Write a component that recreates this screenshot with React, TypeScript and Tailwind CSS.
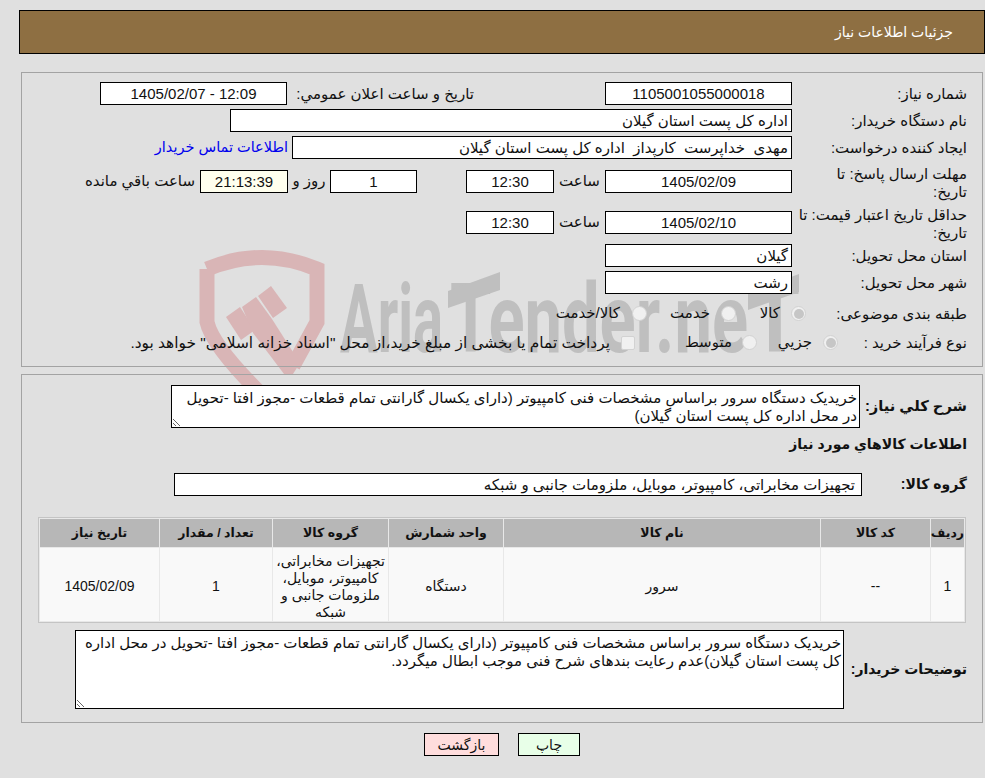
import React from "react";

const Field = ({ w, center, bg, children }: { w: string; center?: boolean; bg?: string; children?: React.ReactNode }) => (
  <div className={`${w} h-[23px] shrink-0 border border-black ${bg ?? "bg-white"} px-[3px] leading-[22px] whitespace-pre ${center ? "text-center" : "text-right"}`}>
    {children}
  </div>
);

const Label = ({ children }: { children: React.ReactNode }) => (
  <div className="w-[175px] shrink-0 leading-[22px]">{children}</div>
);

const Radio = ({ on }: { on?: boolean }) => (
  <span className="w-[15px] h-[15px] shrink-0 rounded-full border border-[#d2d2d2] bg-[#f0f0f0] flex items-center justify-center">
    {on && <span className="w-[10px] h-[10px] rounded-full bg-[#c6c6c6]" />}
  </span>
);

function Watermark() {
  return (
    <svg dir="ltr" className="absolute left-[190px] top-[240px] z-0" width="630" height="160" viewBox="190 240 630 160">
      <g fill="none" stroke="#d9b5b6" strokeWidth="15">
        <path d="M207 269 Q262 246 317 269 L317 322 L293 366" />
        <path d="M207 269 L207 322 Q212 345 259 392" />
      </g>
      <g fill="#d9b5b6">
        <path d="M226 317 L240 307 L255 330 L241 340 Z" />
        <path d="M242 307 L256 297 L272 319 L300 363 L293 374 L284 374 L253 333 Z" />
        <path d="M258 296 L271 286 L287 308 L273 318 Z" />
      </g>
      <g fill="#bfbfbf" fontFamily="Roboto, sans-serif" fontWeight="700" fontSize="96" direction="ltr">
        <text x="340" y="352" textLength="103" lengthAdjust="spacingAndGlyphs">Aria</text>
        <text x="450" y="352" textLength="298" lengthAdjust="spacingAndGlyphs">Tender.ne</text>
        <text x="750" y="352" textLength="50" lengthAdjust="spacingAndGlyphs">T</text>
        <path d="M448 291 L500 272 L500 290 L448 308 Z" />
        <path d="M748 293 L799 274 L799 292 L748 310 Z" />
      </g>
    </svg>
  );
}

export default function App() {
  return (
    <div dir="rtl" className="relative w-[985px] h-[778px] overflow-hidden bg-[#e0e0e0] text-[15px] text-[#111] font-['Liberation_Sans','DejaVu_Sans',sans-serif]">
      <Watermark />

      <div className="relative z-10 pt-[10px]">
        <div className="mr-0 ml-[19px] h-[44px] border border-black bg-[#8e6f42] text-white text-[14px] pr-[31px] leading-[43px]">
          جزئیات اطلاعات نیاز
        </div>

        {/* top panel */}
        <div className="mt-[18px] ml-[21px] mr-[2px] h-[295px] border border-[#a3a3a3] pt-[9px] pr-[15px] flex flex-col">
          <div className="flex items-center h-[23px]">
            <Label>شماره نیاز:</Label>
            <Field w="w-[187px]" center>1105001055000018</Field>
            <div className="mr-[131px] w-[187px] shrink-0 leading-[22px]">تاریخ و ساعت اعلان عمومي:</div>
            <Field w="w-[187px]" center>12:09 - 1405/02/07</Field>
          </div>
          <div className="flex items-center h-[23px] mt-[4px]">
            <Label>نام دستگاه خریدار:</Label>
            <Field w="w-[562px]">اداره کل پست استان گیلان</Field>
          </div>
          <div className="flex items-center h-[23px] mt-[4px]">
            <Label>ایجاد کننده درخواست:</Label>
            <Field w="w-[500px]">مهدی  خداپرست  کارپداز  اداره کل پست استان گیلان</Field>
            <span className="mr-[4px] text-[#0000ee] text-[14.5px] whitespace-nowrap">اطلاعات تماس خریدار</span>
          </div>
          <div className="flex items-center h-[23px] mt-[11px]">
            <Label>
              <div className="mt-[3px] leading-[18px]">مهلت ارسال پاسخ: تا<br />تاریخ:</div>
            </Label>
            <Field w="w-[187px]" center>1405/02/09</Field>
            <span className="w-[51px] shrink-0 text-center">ساعت</span>
            <Field w="w-[88px]" center>12:30</Field>
            <div className="w-[49px] shrink-0" />
            <Field w="w-[87px]" center>1</Field>
            <span className="w-[42px] shrink-0 text-center">روز و</span>
            <Field w="w-[88px]" center bg="bg-[#ffffee]">21:13:39</Field>
            <span className="mr-[5px] whitespace-nowrap">ساعت باقي مانده</span>
          </div>
          <div className="flex items-center h-[23px] mt-[18px]">
            <Label>
              <div className="mt-[3px] leading-[18px]">حداقل تاریخ اعتبار قیمت: تا<br />تاریخ:</div>
            </Label>
            <Field w="w-[187px]" center>1405/02/10</Field>
            <span className="w-[51px] shrink-0 text-center">ساعت</span>
            <Field w="w-[88px]" center>12:30</Field>
          </div>
          <div className="flex items-center h-[23px] mt-[10px]">
            <Label>استان محل تحویل:</Label>
            <Field w="w-[187px]">گیلان</Field>
          </div>
          <div className="flex items-center h-[23px] mt-[4px]">
            <Label>شهر محل تحویل:</Label>
            <Field w="w-[187px]">رشت</Field>
          </div>
          <div className="flex items-center h-[23px] mt-[8px]">
            <div className="w-[161px] shrink-0 leading-[22px]">طبقه بندی موضوعی:</div>
            <Radio on />
            <span className="mr-[11px] w-[44px]">کالا</span>
            <Radio />
            <span className="mr-[11px] w-[63px]">خدمت</span>
            <Radio />
            <span className="mr-[12px] whitespace-nowrap">کالا/خدمت</span>
          </div>
          <div className="flex items-center h-[23px] mt-[6px]">
            <div className="w-[129px] shrink-0 leading-[22px]">نوع فرآیند خرید :</div>
            <Radio on />
            <span className="mr-[11px] w-[55px]">جزیي</span>
            <Radio />
            <span className="mr-[10px] w-[97px]">متوسط</span>
            <span className="w-[14px] h-[14px] shrink-0 rounded-[2px] border border-[#d2d2d2] bg-[#f0f0f0]" />
            <span className="mr-[11px] text-[15.4px] whitespace-nowrap">پرداخت تمام یا بخشی از مبلغ خرید،از محل "اسناد خزانه اسلامی" خواهد بود.</span>
          </div>
        </div>

        {/* description + goods panel */}
        <div className="mt-[7px] ml-[21px] mr-[2px] h-[349px] border border-[#a3a3a3] pt-[10px] pr-[15px]">
          <div className="flex items-center">
            <div className="w-[107px] shrink-0 font-bold text-[14.7px] whitespace-nowrap">شرح كلي نیاز:</div>
            <textarea
              readOnly
              rows={2}
              className="w-[689px] h-[43px] border border-black bg-white px-[2px] pt-[3px] leading-[18px] outline-none block resize overflow-hidden"
              defaultValue="خریدیک دستگاه سرور براساس مشخصات فنی کامپیوتر (دارای یکسال گارانتی تمام قطعات -مجوز افتا -تحویل در محل اداره کل پست استان گیلان)"
            />
          </div>
          <div className="mt-[3px] h-[26px] font-bold text-[14px] leading-[26px]">اطلاعات کالاهاي مورد نیاز</div>
          <div className="flex items-center mt-[16px]">
            <div className="w-[105px] shrink-0 font-bold text-[14px]">گروه کالا:</div>
            <Field w="w-[688px]">
              <span className="pr-[3px]">تجهیزات مخابراتی، کامپیوتر، موبایل، ملزومات جانبی و شبکه</span>
            </Field>
          </div>

          <table className="mt-[21px] mr-[1px] w-[928px] table-fixed border-separate border-spacing-[1px] border border-[#c4c4c4] bg-[#e8e8e8] text-[14px] text-center">
            <colgroup>
              <col className="w-[33px]" />
              <col className="w-[109px]" />
              <col className="w-[316px]" />
              <col className="w-[114px]" />
              <col className="w-[115px]" />
              <col className="w-[112px]" />
              <col className="w-[119px]" />
            </colgroup>
            <thead>
              <tr className="h-[28px] bg-[#b7b7b7] font-bold text-[12.5px]">
                <th>ردیف</th>
                <th>کد کالا</th>
                <th>نام کالا</th>
                <th>واحد شمارش</th>
                <th>گروه کالا</th>
                <th>تعداد / مقدار</th>
                <th>تاریخ نیاز</th>
              </tr>
            </thead>
            <tbody>
              <tr className="h-[73px] bg-[#f9f9f9]">
                <td className="pt-[4px]">1</td>
                <td className="pt-[4px]">--</td>
                <td className="pt-[4px]">سرور</td>
                <td className="pt-[4px]">دستگاه</td>
                <td className="leading-[17px] px-[2px] pt-[4px]">تجهیزات مخابراتی، کامپیوتر، موبایل، ملزومات جانبی و شبکه</td>
                <td className="pt-[4px]">1</td>
                <td className="pt-[4px]">1405/02/09</td>
              </tr>
            </tbody>
          </table>

          <div className="flex items-center mt-[7px]">
            <div className="w-[123px] shrink-0 font-bold text-[14px] whitespace-nowrap">توضیحات خریدار:</div>
            <textarea
              readOnly
              className="w-[769px] h-[79px] border border-black bg-white px-[2px] pt-[3px] leading-[18px] outline-none block resize overflow-hidden"
              defaultValue="خریدیک دستگاه سرور براساس مشخصات فنی کامپیوتر (دارای یکسال گارانتی تمام قطعات -مجوز افتا -تحویل در محل اداره کل پست استان گیلان)عدم رعایت بندهای شرح فنی موجب ابطال میگردد."
            />
          </div>
        </div>

        <div className="mt-[10px] flex mr-[405px] gap-[19px]">
          <button className="w-[62px] h-[23px] border border-black bg-[#e8ffe8] leading-[20px] text-[14px]">چاپ</button>
          <button className="w-[75px] h-[23px] border border-black bg-[#ffdddd] leading-[20px] text-[14px]">بازگشت</button>
        </div>
      </div>
    </div>
  );
}
